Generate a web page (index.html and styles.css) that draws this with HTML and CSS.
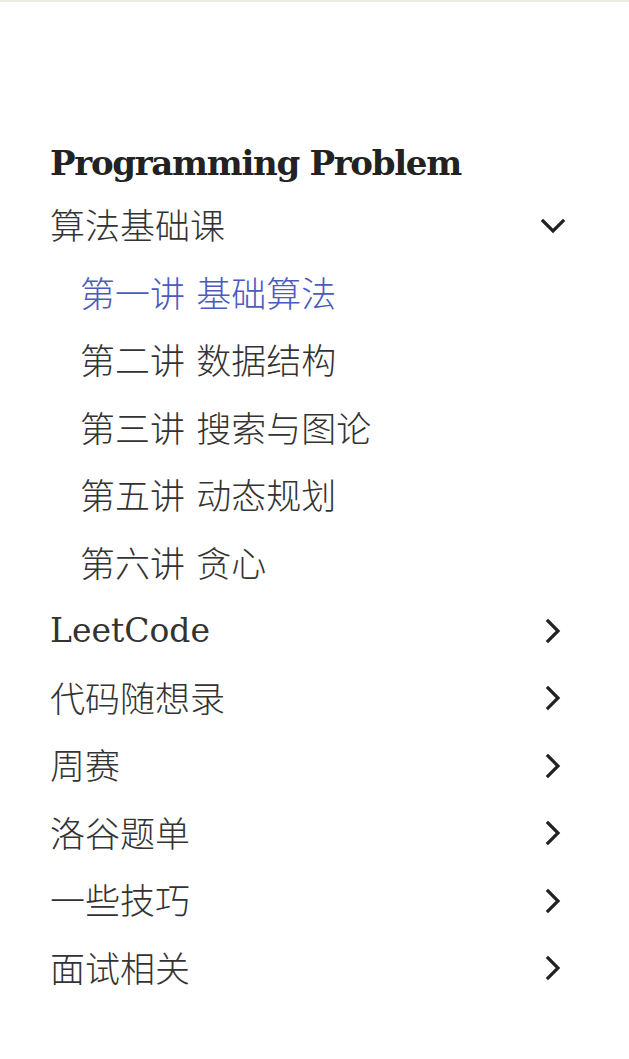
FILE: index.html
```html
<!DOCTYPE html>
<html lang="zh">
<head>
<meta charset="utf-8">
<title>Programming Problem</title>
<link rel="stylesheet" href="styles.css">
</head>
<body>
<div class="topbar"></div>
<nav class="sidebar">
  <h1 class="title">Programming Problem</h1>
  <ul class="menu">
    <li>
      <div class="row"><span class="label">算法基础课</span><span class="icon"><svg width="26" height="16" viewBox="0 0 26 16"><path d="M3 3 L13 13 L23 3" /></svg></span></div>
      <ul class="submenu">
        <li class="row sub active"><span class="label">第一讲 基础算法</span></li>
        <li class="row sub"><span class="label">第二讲 数据结构</span></li>
        <li class="row sub"><span class="label">第三讲 搜索与图论</span></li>
        <li class="row sub"><span class="label">第五讲 动态规划</span></li>
        <li class="row sub"><span class="label">第六讲 贪心</span></li>
      </ul>
    </li>
    <li class="row"><span class="label latin">LeetCode</span><span class="icon"><svg width="16" height="26" viewBox="0 0 16 26"><path d="M3 3 L13 13 L3 23" /></svg></span></li>
    <li class="row"><span class="label">代码随想录</span><span class="icon"><svg width="16" height="26" viewBox="0 0 16 26"><path d="M3 3 L13 13 L3 23" /></svg></span></li>
    <li class="row"><span class="label">周赛</span><span class="icon"><svg width="16" height="26" viewBox="0 0 16 26"><path d="M3 3 L13 13 L3 23" /></svg></span></li>
    <li class="row"><span class="label">洛谷题单</span><span class="icon"><svg width="16" height="26" viewBox="0 0 16 26"><path d="M3 3 L13 13 L3 23" /></svg></span></li>
    <li class="row"><span class="label">一些技巧</span><span class="icon"><svg width="16" height="26" viewBox="0 0 16 26"><path d="M3 3 L13 13 L3 23" /></svg></span></li>
    <li class="row"><span class="label">面试相关</span><span class="icon"><svg width="16" height="26" viewBox="0 0 16 26"><path d="M3 3 L13 13 L3 23" /></svg></span></li>
  </ul>
</nav>
</body>
</html>
```

FILE: styles.css
```css
html, body {
  margin: 0;
  padding: 0;
  background: #ffffff;
}
body {
  font-family: "DejaVu Serif", "Noto Sans CJK SC", serif;
  color: #333333;
}
.topbar {
  height: 2px;
  background: #ebebe5;
}
.sidebar {
  padding: 0 61px 0 50px;
}
.title {
  margin: 0;
  padding-top: 141px;
  height: 49px;
  font-family: "DejaVu Serif", serif;
  font-weight: bold;
  font-size: 34px;
  line-height: 40px;
  color: #222222;
  letter-spacing: -1.3px;
}
.menu, .submenu {
  list-style: none;
  margin: 0;
  padding: 0;
}
.row {
  display: flex;
  align-items: center;
  justify-content: space-between;
  height: 67.5px;
  font-size: 35px;
  font-weight: 300;
}
.label {
  position: relative;
  top: -2px;
}
.latin {
  font-size: 33px;
  font-weight: normal;
  top: 0;
}
.sub {
  padding-left: 30px;
}
.active {
  color: #4a5bbd;
}
.icon {
  width: 30px;
  display: flex;
  justify-content: center;
  align-items: center;
}
.icon svg path {
  fill: none;
  stroke: #222222;
  stroke-width: 3.2;
  stroke-linecap: square;
}
```
